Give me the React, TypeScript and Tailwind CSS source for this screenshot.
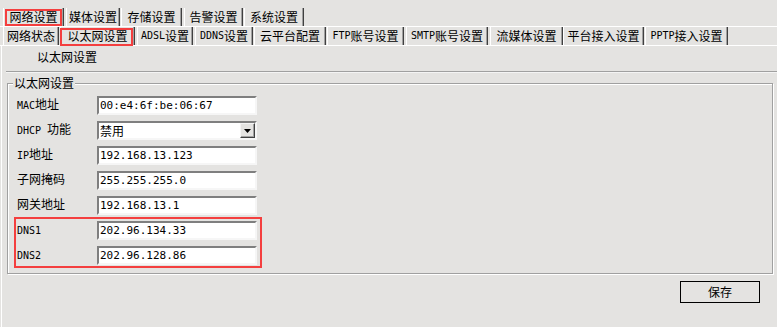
const topTabs = [
  { label: '网络设置', cls: 'ml-[3px] w-[61px]', marked: true },
  { label: '媒体设置', cls: 'ml-[2px] w-[54px]' },
  { label: '存储设置', cls: 'ml-[1px] w-[61px]' },
  { label: '告警设置', cls: 'ml-[2px] w-[59px]' },
  { label: '系统设置', cls: 'ml-[1px] w-[60px]' },
];

const subTabs = [
  { label: '网络状态', cls: 'ml-[3px] w-[56px]' },
  { label: '以太网设置', cls: 'ml-[1px] w-[75px]', marked: true },
  { label: 'ADSL设置', cls: 'ml-[2px] w-[56px]' },
  { label: 'DDNS设置', cls: 'ml-[2px] w-[58px]' },
  { label: '云平台配置', cls: 'ml-[1px] w-[72px]' },
  { label: 'FTP账号设置', cls: 'ml-[1px] w-[77px]' },
  { label: 'SMTP账号设置', cls: 'ml-[2px] w-[82px]' },
  { label: '流媒体设置', cls: 'ml-[2px] w-[73px]' },
  { label: '平台接入设置', cls: 'ml-0 w-[81px]' },
  { label: 'PPTP接入设置', cls: 'ml-[1px] w-[83px]' },
];

// ascii runs get the narrow mono face, like the bitmap font in the original
function Mixed({ s }: { s: string }) {
  const parts = s.match(/[\x20-\x7e]+|[^\x20-\x7e]+/g) ?? [];
  return (
    <>
      {parts.map((p, i) =>
        /^[\x20-\x7e]+$/.test(p) ? (
          <span key={i} className="font-['DejaVu_Sans_Mono',monospace] text-[10px] whitespace-pre">
            {p}
          </span>
        ) : (
          <span key={i}>{p}</span>
        ),
      )}
    </>
  );
}

function Tab({ label, cls, marked, redCls }: { label: string; cls: string; marked?: boolean; redCls: string }) {
  return (
    <div
      className={`relative flex h-[18px] shrink-0 items-center justify-center whitespace-nowrap border-l border-r border-l-white border-r-[#404040] leading-none shadow-[inset_-1px_0_0_#a0a0a0] ${cls}`}
    >
      <Mixed s={label} />
      {marked && <span className={`pointer-events-none absolute border-2 border-[#f43f3f] ${redCls}`} />}
    </div>
  );
}

function Field({ value }: { value: string }) {
  return (
    <div className="flex h-[19px] w-[160px] items-center border-2 border-t-[#7f7f7f] border-l-[#7f7f7f] border-b-[#f6f6f6] border-r-[#f6f6f6] bg-white pl-px font-['DejaVu_Sans_Mono',monospace] text-[11px] leading-none">
      {value}
    </div>
  );
}

function Select({ value }: { value: string }) {
  return (
    <div className="flex h-[19px] w-[160px] items-center border-2 border-t-[#7f7f7f] border-l-[#7f7f7f] border-b-[#f6f6f6] border-r-[#f6f6f6] bg-white pl-px text-[12px] leading-none">
      <span className="flex-1">{value}</span>
      <span className="flex h-[15px] w-[15px] items-center justify-center border border-t-[#f4f4f4] border-l-[#f4f4f4] border-b-[#404040] border-r-[#404040] bg-[#e4e3e1] shadow-[inset_-1px_-1px_0_#a0a0a0]">
        <svg width="7" height="4" viewBox="0 0 7 4">
          <polygon points="0,0 7,0 3.5,4" fill="#000" />
        </svg>
      </span>
    </div>
  );
}

function Row({ label, children }: { label: string; children: React.ReactNode }) {
  return (
    <div className="flex h-[19px] items-start">
      <div className="w-[80px] pt-px text-[12px] leading-[14px]">
        <Mixed s={label} />
      </div>
      {children}
    </div>
  );
}

export default function App() {
  return (
    <div className="h-[327px] w-[777px] overflow-hidden bg-[#e4e3e1] font-['Noto_Sans_CJK_SC',sans-serif] text-[12px] text-black">
      <div className="flex h-[27px] items-end border-b border-white">
        {topTabs.map((t) => (
          <Tab key={t.label} {...t} redCls="left-px top-px right-px bottom-0" />
        ))}
      </div>
      <div className="flex h-[19px] items-end border-b border-white">
        {subTabs.map((t) => (
          <Tab key={t.label} {...t} redCls="-left-px top-px right-px -bottom-px" />
        ))}
      </div>

      <div className="ml-px h-[281px] border-l border-white">
        <div className="h-[25px] pl-[35px] pt-[4px] leading-[14px]">以太网设置</div>
        <div className="ml-[4px] border-t border-[#a0a0a0] shadow-[0_1px_0_#f4f4f4]" />

        <div className="relative ml-[5px] mt-[11px] w-[766px] border border-[#a0a0a0] pb-[8px] pl-[9px] pt-[12px] shadow-[inset_1px_1px_0_#fff,1px_1px_0_#fff]">
          <span className="absolute left-[5px] top-[-8px] bg-[#e4e3e1] px-[1px] leading-[14px]">以太网设置</span>
          <div className="flex flex-col gap-[6px]">
            <Row label="MAC地址">
              <Field value="00:e4:6f:be:06:67" />
            </Row>
            <Row label="DHCP 功能">
              <Select value="禁用" />
            </Row>
            <Row label="IP地址">
              <Field value="192.168.13.123" />
            </Row>
            <Row label="子网掩码">
              <Field value="255.255.255.0" />
            </Row>
            <Row label="网关地址">
              <Field value="192.168.13.1" />
            </Row>
            <div className="relative flex w-[240px] flex-col gap-[6px]">
              <Row label="DNS1">
                <Field value="202.96.134.33" />
              </Row>
              <Row label="DNS2">
                <Field value="202.96.128.86" />
              </Row>
              <span className="pointer-events-none absolute -left-[3px] -top-[4px] -right-[5px] -bottom-[3px] border-2 border-[#f43f3f]" />
            </div>
          </div>
        </div>

        <div className="flex justify-end pr-[17px] pt-[7px]">
          <button className="flex h-[22px] w-[80px] items-center justify-center border border-black text-[12px] leading-none">
            保存
          </button>
        </div>
      </div>
    </div>
  );
}
